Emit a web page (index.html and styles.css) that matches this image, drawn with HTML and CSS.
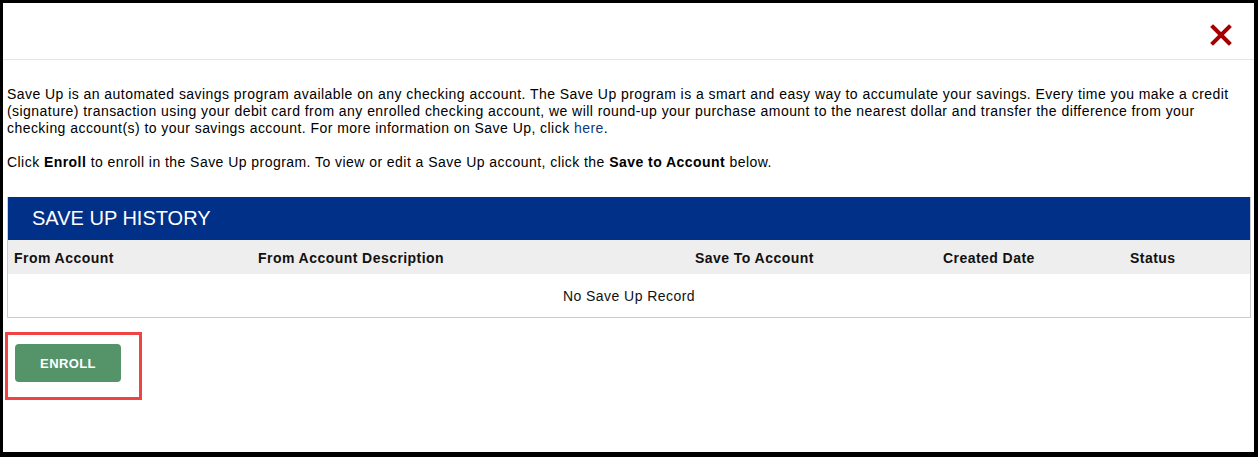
FILE: index.html
```html
<!DOCTYPE html>
<html lang="en">
<head>
    <meta charset="UTF-8">
    <meta name="viewport" content="width=device-width, initial-scale=1.0">
    <title>Save Up</title>
    <link rel="stylesheet" href="styles.css">
</head>
<body>
    <div class="modal">
        <div class="modal-header">
            <button class="close-btn" aria-label="Close">
                <svg width="22" height="22" viewBox="0 0 22 22">
                    <path d="M3 3 L19 19 M19 3 L3 19" stroke="#a50000" stroke-width="4" stroke-linecap="square"/>
                </svg>
            </button>
        </div>
        <div class="modal-body">
            <p>Save Up is an automated savings program available on any checking account. The Save Up program is a smart and easy way to accumulate your savings. Every time you make a credit (signature) transaction using your debit card from any enrolled checking account, we will round-up your purchase amount to the nearest dollar and transfer the difference from your checking account(s) to your savings account. For more information on Save Up, click <a href="#">here</a>.</p>
            <p>Click <b>Enroll</b> to enroll in the Save Up program. To view or edit a Save Up account, click the <b>Save to Account</b> below.</p>

            <div class="history">
                <h2>SAVE UP HISTORY</h2>
                <table>
                    <thead>
                        <tr>
                            <th class="col-from">From Account</th>
                            <th class="col-desc">From Account Description</th>
                            <th class="col-to">Save To Account</th>
                            <th class="col-date">Created Date</th>
                            <th class="col-status">Status</th>
                        </tr>
                    </thead>
                    <tbody>
                        <tr>
                            <td colspan="5" class="empty">No Save Up Record</td>
                        </tr>
                    </tbody>
                </table>
            </div>

            <div class="enroll-wrap">
                <button class="enroll-btn">ENROLL</button>
            </div>
        </div>
    </div>
</body>
</html>
```

FILE: styles.css
```css
html, body {
    margin: 0;
    padding: 0;
    background: #fff;
}
body {
    font-family: "Liberation Sans", Arial, sans-serif;
    font-size: 14px;
    letter-spacing: 0.45px;
    color: #000;
}
.modal {
    box-sizing: border-box;
    width: 1258px;
    height: 457px;
    border-style: solid;
    border-color: #000;
    border-width: 3px 4px 5px 3px;
    overflow: hidden;
}
.modal-header {
    height: 56px;
    border-bottom: 1px solid #e5e5e5;
    display: flex;
    justify-content: flex-end;
    align-items: center;
    padding-right: 22px;
}
.close-btn {
    background: none;
    border: none;
    padding: 0;
    margin-top: 8px;
    width: 22px;
    height: 22px;
    cursor: pointer;
}
.modal-body {
    padding: 26px 3px 0 4px;
}
.modal-body p {
    margin: 0 0 16px;
    line-height: 17px;
}
.modal-body p + p {
    margin-top: 17px;
}
.modal-body a {
    color: #0b3a80;
    text-decoration: none;
}
.history {
    margin-top: 26px;
    border: 1px solid #ccc;
    border-top: none;
}
.history h2 {
    margin: 0;
    height: 43px;
    line-height: 43px;
    background: #003087;
    color: #fff;
    font-size: 20px;
    font-weight: normal;
    letter-spacing: 0;
    padding-left: 24px;
}
.history table {
    width: 100%;
    border-collapse: collapse;
    table-layout: fixed;
}
.history th {
    background: #eee;
    height: 33px;
    padding: 1px 6px 0;
    text-align: left;
    font-weight: bold;
    color: #111;
}
.col-from { width: 232px; }
.col-desc { width: 425px; }
.col-to { width: 236px; }
.col-date { width: 175px; }
.history td.empty {
    text-align: center;
    height: 43px;
    padding: 0;
    color: #111;
}
.enroll-wrap {
    margin-top: 14px;
    margin-left: -2px;
    width: 124px;
    height: 53px;
    border: 3px solid #f04444;
    display: flex;
    align-items: flex-start;
    padding: 9px 0 0 7px;
}
.enroll-btn {
    width: 106px;
    height: 38px;
    background: #559368;
    color: #fff;
    border: none;
    border-radius: 4px;
    font-family: "Liberation Sans", Arial, sans-serif;
    font-size: 13px;
    font-weight: bold;
    letter-spacing: 0.4px;
    cursor: pointer;
}
```
